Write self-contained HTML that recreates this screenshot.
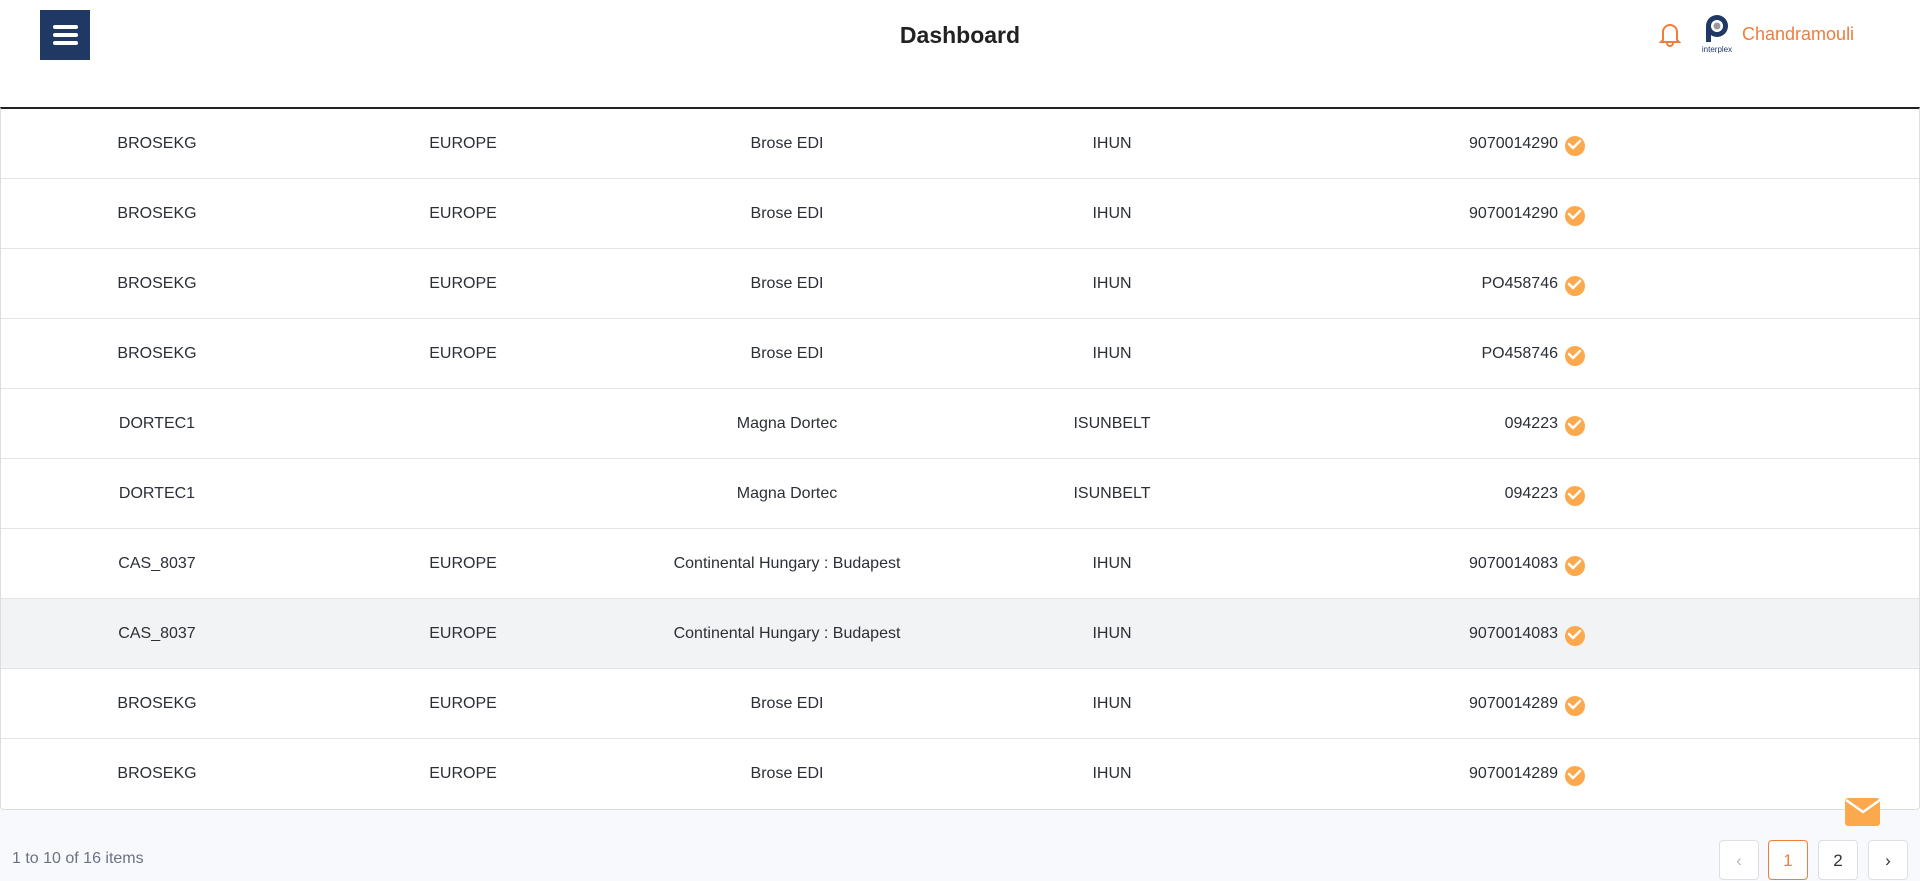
<!DOCTYPE html>
<html><head><meta charset="utf-8"><style>
*{margin:0;padding:0;box-sizing:border-box}
body{width:1920px;height:869px;overflow:hidden;background:#f8f9fc;font-family:"Liberation Sans",sans-serif;color:#2b2f36;position:relative}
.hdr{position:absolute;left:0;top:0;width:1920px;height:107px;background:#fff}
.ham{position:absolute;left:40px;top:10px;width:50px;height:50px;background:#1f3864}
.ham i{position:absolute;left:13px;width:25px;height:4px;background:#fff;border-radius:2px}
.title{position:absolute;left:0;width:1920px;top:22px;text-align:center;font-weight:bold;font-size:23px;color:#222}
.user{position:absolute;left:1742px;top:24px;font-size:18px;color:#ef7d3c}
.tbl{position:absolute;left:0;top:107px;width:1920px;height:703px;background:#fff;border-top:2px solid #222;border-left:1px solid #ddd;border-right:1px solid #ddd;border-bottom:1px solid #ddd;border-radius:0 0 4px 4px}
.row{position:absolute;left:0;width:1918px;height:70px;border-bottom:1px solid #e2e4e8;font-size:16px}
.row span{position:absolute;top:26px;transform:translateX(-50%);white-space:nowrap}
.row .n{transform:none;right:361px}
.row .c{position:absolute;left:1564px;top:27px;width:20px;height:20px;border-radius:50%;background:#fba94c}
.ft{position:absolute;left:12px;top:850px;font-size:16px;color:#6b7280}
.pg{position:absolute;top:840px;width:40px;height:40px;border:1px solid #dcdfe4;border-radius:4px;background:#fff;text-align:center;font-size:17px;line-height:40px;color:#333}
</style></head><body>
<div class="hdr">
<div class="ham"><i style="top:15px"></i><i style="top:23px"></i><i style="top:31px"></i></div>
<div class="title">Dashboard</div>
<svg style="position:absolute;left:1658px;top:21px" width="24" height="26" viewBox="0 0 24 26"><path d="M5 19V11a7 7 0 0 1 14 0v8l2 2H3z M9 22a3 3 0 0 0 6 0" fill="none" stroke="#ef7d3c" stroke-width="2"/></svg>
<svg style="position:absolute;left:1700px;top:14px" width="34" height="40" viewBox="0 0 34 40"><circle cx="17" cy="12" r="11" fill="#1f3864"/><rect x="6" y="12" width="5" height="16" fill="#1f3864"/><circle cx="17" cy="12" r="6" fill="#fff"/><circle cx="17" cy="12" r="3.5" fill="#999"/><text x="17" y="38" font-size="8" text-anchor="middle" fill="#1f3864" font-family="Liberation Sans">interplex</text></svg>
<div class="user">Chandramouli</div>
</div>
<div class="tbl">
<div class="row" style="top:0"><span style="left:156px">BROSEKG</span><span style="left:462px">EUROPE</span><span style="left:786px">Brose EDI</span><span style="left:1111px">IHUN</span><span class="n">9070014290</span><i class="c"></i></div>
<div class="row" style="top:70px"><span style="left:156px">BROSEKG</span><span style="left:462px">EUROPE</span><span style="left:786px">Brose EDI</span><span style="left:1111px">IHUN</span><span class="n">9070014290</span><i class="c"></i></div>
<div class="row" style="top:140px"><span style="left:156px">BROSEKG</span><span style="left:462px">EUROPE</span><span style="left:786px">Brose EDI</span><span style="left:1111px">IHUN</span><span class="n">PO458746</span><i class="c"></i></div>
<div class="row" style="top:210px"><span style="left:156px">BROSEKG</span><span style="left:462px">EUROPE</span><span style="left:786px">Brose EDI</span><span style="left:1111px">IHUN</span><span class="n">PO458746</span><i class="c"></i></div>
<div class="row" style="top:280px"><span style="left:156px">DORTEC1</span><span style="left:786px">Magna Dortec</span><span style="left:1111px">ISUNBELT</span><span class="n">094223</span><i class="c"></i></div>
<div class="row" style="top:350px"><span style="left:156px">DORTEC1</span><span style="left:786px">Magna Dortec</span><span style="left:1111px">ISUNBELT</span><span class="n">094223</span><i class="c"></i></div>
<div class="row" style="top:420px"><span style="left:156px">CAS_8037</span><span style="left:462px">EUROPE</span><span style="left:786px">Continental Hungary : Budapest</span><span style="left:1111px">IHUN</span><span class="n">9070014083</span><i class="c"></i></div>
<div class="row" style="top:490px;background:#f2f3f4"><span style="left:156px">CAS_8037</span><span style="left:462px">EUROPE</span><span style="left:786px">Continental Hungary : Budapest</span><span style="left:1111px">IHUN</span><span class="n">9070014083</span><i class="c"></i></div>
<div class="row" style="top:560px"><span style="left:156px">BROSEKG</span><span style="left:462px">EUROPE</span><span style="left:786px">Brose EDI</span><span style="left:1111px">IHUN</span><span class="n">9070014289</span><i class="c"></i></div>
<div class="row" style="top:630px;border-bottom:none"><span style="left:156px">BROSEKG</span><span style="left:462px">EUROPE</span><span style="left:786px">Brose EDI</span><span style="left:1111px">IHUN</span><span class="n">9070014289</span><i class="c"></i></div>
</div>
<svg style="position:absolute;left:0;top:0;pointer-events:none" width="1920" height="869">
<g fill="none" stroke="#fff" stroke-width="2.5" stroke-linecap="round" stroke-linejoin="round">
<path d="M1569 144l4 4 7-7"/><path d="M1569 214l4 4 7-7"/><path d="M1569 284l4 4 7-7"/><path d="M1569 354l4 4 7-7"/><path d="M1569 424l4 4 7-7"/><path d="M1569 494l4 4 7-7"/><path d="M1569 564l4 4 7-7"/><path d="M1569 634l4 4 7-7"/><path d="M1569 704l4 4 7-7"/><path d="M1569 774l4 4 7-7"/>
</g>
<rect x="1845" y="798" width="35" height="28" rx="3" fill="#fba94c"/>
<path d="M1846 800l17 12 17-12" fill="none" stroke="#fff" stroke-width="2.5"/>
</svg>
<div class="ft">1 to 10 of 16 items</div>
<div class="pg" style="left:1719px;color:#bbb">&#8249;</div>
<div class="pg" style="left:1768px;border-color:#ef7d3c;color:#ef7d3c">1</div>
<div class="pg" style="left:1818px">2</div>
<div class="pg" style="left:1868px">&#8250;</div>
</body></html>
